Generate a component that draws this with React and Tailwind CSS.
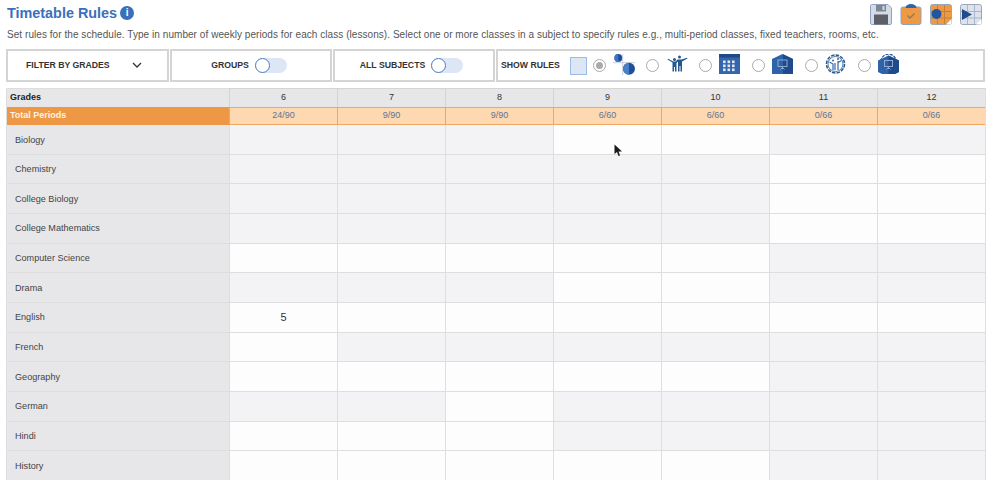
import React from 'react';

const grades = ['6', '7', '8', '9', '10', '11', '12'];
const totals = ['24/90', '9/90', '9/90', '6/60', '6/60', '0/66', '0/66'];

// open = grades the subject is taught in (white cells)
const subjects = [
  { name: 'Biology', open: [3, 4] },
  { name: 'Chemistry', open: [5, 6] },
  { name: 'College Biology', open: [5, 6] },
  { name: 'College Mathematics', open: [5, 6] },
  { name: 'Computer Science', open: [0, 1, 2, 3, 4] },
  { name: 'Drama', open: [3, 4] },
  { name: 'English', open: [0, 1, 2, 3, 4, 5, 6], values: { 0: '5' } },
  { name: 'French', open: [0] },
  { name: 'Geography', open: [0, 1, 2, 3, 4] },
  { name: 'German', open: [2] },
  { name: 'Hindi', open: [0, 1, 2] },
  { name: 'History', open: [0, 1, 2, 3, 4] },
];

const Toggle = () => (
  <span className="relative block w-[32px] h-[15px] rounded-full bg-[#dde6f5]">
    <span className="absolute left-0 top-0 w-[15px] h-[15px] rounded-full bg-white border-[1.500px] border-[#4a7cc4]"></span>
  </span>
);

const Radio = ({ checked }) => (
  <span className="flex items-center justify-center w-[13px] h-[13px] rounded-full bg-white border border-[#aaaaaa] shrink-0">
    {checked && <span className="w-[7px] h-[7px] rounded-full bg-[#aaaaaa]"></span>}
  </span>
);

const SplitIcon = () => (
  <svg width="22" height="21" viewBox="0 0 22 21" className="shrink-0">
    <path d="M9.700 0V21M0 8.700H22" stroke="#c5cfe0" strokeWidth="1" fill="none" />
    <circle cx="5.300" cy="3.900" r="3.900" fill="#1f4f97" />
    <path d="M5.300 0a3.900 3.900 0 0 0 0 7.800z" fill="#3f76c3" />
    <circle cx="16" cy="14.700" r="6" fill="#1f4f97" />
    <path d="M16 8.700a6 6 0 0 0 0 12z" fill="#4a80c8" />
  </svg>
);

const TeachersIcon = () => (
  <svg width="21" height="17" viewBox="0 0 21 17" className="shrink-0">
    <circle cx="7.500" cy="4.500" r="1.500" fill="#24578f" />
    <circle cx="12.500" cy="2" r="1.500" fill="#24578f" />
    <path d="M.5 4.500L5.500 7.500V16.500H7V12H8V16.500H9.500V8L11 6.500V16.500H12.500V11H13.500V16.500H15V6.500L20.500 3.500 20 2.800 14.500 4.500H10.500L8.500 6.500H6.300L1 3.800z" fill="#24578f" />
  </svg>
);

const CalendarIcon = () => (
  <svg width="21" height="20" viewBox="0 0 21 20" className="shrink-0">
    <rect width="21" height="20" fill="#3566ab" />
    <rect width="21" height="3.500" fill="#1f4a86" />
    {[6.500, 10.500, 14.500].map(y =>
      [4, 8.500, 13].map(x => <rect key={`${x}-${y}`} x={x} y={y} width="2.600" height="2.600" fill="#dfe8f5" />)
    )}
  </svg>
);

const RoomIcon = () => (
  <svg width="21" height="20" viewBox="0 0 21 20" className="shrink-0">
    <path d="M0 5L10.500 0 21 5V20H0z" fill="#2e62aa" />
    <path d="M11 .3L21 5V20H11z" fill="#1f4b8c" />
    <rect x="6" y="6" width="9" height="6.500" fill="none" stroke="#8fa9d0" strokeWidth="1" />
    <path d="M10.500 12.500V15M8.500 15.500L10.500 13.500 12.500 15.500" stroke="#8fa9d0" strokeWidth="1" fill="none" />
  </svg>
);

const GearOutlineIcon = () => (
  <svg width="21" height="20" viewBox="0 0 21 20" className="shrink-0">
    <circle cx="10.500" cy="10" r="9" fill="#ffffff" stroke="#24578f" strokeWidth="1.500" strokeDasharray="3.500 1.200" />
    <circle cx="10.500" cy="10" r="7.500" fill="none" stroke="#24578f" strokeWidth=".8" />
    <circle cx="8" cy="6.500" r="1" fill="#3566ab" />
    <circle cx="13" cy="5" r="1" fill="#3566ab" />
    <path d="M4.500 8L8 10V16M10 9V16M13 7V16M16.500 6.500L13 8.500" stroke="#3566ab" strokeWidth="1.200" fill="none" />
  </svg>
);

const GearRoomIcon = () => (
  <svg width="21" height="20" viewBox="0 0 21 20" className="shrink-0">
    <circle cx="10.500" cy="8" r="7.800" fill="#ffffff" stroke="#24578f" strokeWidth="1.300" strokeDasharray="3 1.200" />
    <path d="M0 6.500L10.500 1.500 21 6.500V18L17 20H4L0 18z" fill="#2e62aa" />
    <path d="M10.500 1.500L21 6.500V18L17 20H10.500z" fill="#1f4b8c" />
    <rect x="6.500" y="6.500" width="8" height="6" fill="none" stroke="#8fa9d0" strokeWidth="1" />
    <path d="M10.500 12.500V15M8.500 15.500L10.500 13.500 12.500 15.500" stroke="#8fa9d0" strokeWidth="1" fill="none" />
  </svg>
);

const SaveIcon = () => (
  <svg width="22" height="21" viewBox="0 0 22 21">
    <path d="M2.500 .5H18l3.500 3.500v15a1.500 1.500 0 0 1-1.500 1.500H2A1.500 1.500 0 0 1 .5 19V2A1.500 1.500 0 0 1 2.500 .5z" fill="#d5dbe6" stroke="#8ea3c4" />
    <rect x="6" y="1" width="10" height="6.500" fill="#7f8692" />
    <rect x="12.500" y="2" width="2" height="4" fill="#d5dbe6" />
    <rect x="4" y="10.500" width="14" height="10" fill="#5c5f66" />
  </svg>
);

const ClipboardIcon = () => (
  <svg width="22" height="21" viewBox="0 0 22 21">
    <rect x="1" y="3" width="20" height="17.500" rx="2" fill="#ee9a45" stroke="#8ea3c4" />
    <path d="M5.500 4a5.500 4 0 0 1 11 0z" fill="#2f63ad" />
    <path d="M7.500 11.500l2.500 2.500 4.500-4.500" stroke="#8a7a63" strokeWidth="1.300" fill="none" />
  </svg>
);

const GridDotIcon = () => (
  <svg width="22" height="21" viewBox="0 0 22 21">
    <rect x=".5" y=".5" width="21" height="20" rx="2" fill="#ee9a45" stroke="#9aa7bb" />
    <path d="M7.500 1V20M14.500 1V20M1 7.500H21M1 14H21" stroke="#c57f3c" strokeWidth="1" />
    <path d="M21.500 15v4a1.500 1.500 0 0 1-1.500 1.500h-4z" fill="#ffffff" />
    <circle cx="6.500" cy="10" r="5" fill="#1f55a3" />
  </svg>
);

const GridPlayIcon = () => (
  <svg width="22" height="21" viewBox="0 0 22 21">
    <rect x=".5" y=".5" width="21" height="20" rx="2" fill="#dde2ec" stroke="#9aa7bb" />
    <path d="M7.500 1V20M14.500 1V20M1 7.500H21M1 14H21" stroke="#a9b5c8" strokeWidth="1" />
    <path d="M21.500 15v4a1.500 1.500 0 0 1-1.500 1.500h-4z" fill="#ffffff" />
    <path d="M2 5L12 10.500 2 16z" fill="#1f4b8c" />
  </svg>
);

const App = () => {
  return (
    <div className="relative h-[480px] w-[1000px] overflow-hidden bg-white font-['Liberation_Sans',Arial,sans-serif] text-[#333333]">
      <div className="flex items-start justify-between pl-[7px] pr-[18px] h-[27px]">
        <div className="flex items-center gap-[3px] pt-[4px]">
          <h1 className="text-[14.400px] leading-[18px] font-bold text-[#3a70bb]">Timetable Rules</h1>
          <span className="flex items-center justify-center w-[14px] h-[14px] rounded-full bg-[#3a70bb] text-white text-[10px] leading-none font-bold">i</span>
        </div>
        <div className="flex items-center gap-[8px] pt-[4px]">
          <SaveIcon />
          <ClipboardIcon />
          <GridDotIcon />
          <GridPlayIcon />
        </div>
      </div>

      <p className="pl-[7px] h-[22px] text-[10px] leading-[16px] tracking-[0.055px] text-[#555555]">
        Set rules for the schedule. Type in number of weekly periods for each class (lessons). Select one or more classes in a subject to specify rules e.g., multi-period classes, fixed teachers, rooms, etc.
      </p>

      <div className="flex gap-[1px] ml-[6px] w-[979px] h-[33px] text-[8.700px] font-bold text-[#333333]">
        <div className="flex items-center w-[163px] border-2 border-[#d4d4d4] pl-[18px]">
          <span>FILTER BY GRADES</span>
          <svg width="10" height="6" viewBox="0 0 10 6" className="ml-[22px] mb-[1px]">
            <path d="M1 1l4 4 4-4" stroke="#333333" strokeWidth="1.300" fill="none" />
          </svg>
        </div>
        <div className="flex items-center justify-center gap-[6px] w-[162px] border-2 border-[#d4d4d4] pr-[4px]">
          <span>GROUPS</span>
          <Toggle />
        </div>
        <div className="flex items-center justify-center gap-[6px] w-[162px] border-2 border-[#d4d4d4] pr-[5px]">
          <span>ALL SUBJECTS</span>
          <Toggle />
        </div>
        <div className="flex items-center flex-1 border-2 border-[#d4d4d4] pl-[3px]">
          <span className="mr-[10px]">SHOW RULES</span>
          <span className="w-[17px] h-[18px] bg-[#dde6f5] border border-[#9dbbe6] mr-[6px] shrink-0"></span>
          <Radio checked />
          <span className="ml-[7px] mr-[11px] mb-[3px]"><SplitIcon /></span>
          <Radio />
          <span className="ml-[8px] mr-[11px] mb-[4px]"><TeachersIcon /></span>
          <Radio />
          <span className="ml-[7px] mr-[12px] mb-[3px]"><CalendarIcon /></span>
          <Radio />
          <span className="ml-[7px] mr-[12px] mb-[3px]"><RoomIcon /></span>
          <Radio />
          <span className="ml-[7px] mr-[12px] mb-[3px]"><GearOutlineIcon /></span>
          <Radio />
          <span className="ml-[7px] mb-[3px]"><GearRoomIcon /></span>
        </div>
      </div>

      <div className="grid grid-cols-[222px_repeat(7,108px)] ml-[6px] mt-[6px] w-[980px] border-x border-[#dedede] text-[9px]">
        <div className="flex items-center h-[19px] pl-[3px] bg-[#e7e7e9] border-t border-[#dddddd] font-bold text-[#222222]">Grades</div>
        {grades.map(grade => (
          <div key={grade} className="flex items-center justify-center h-[19px] bg-[#e7e7e9] border-t border-l border-[#d4d4d4] text-[#333333]">{grade}</div>
        ))}
        <div className="flex items-center h-[18px] pl-[3px] bg-[#ee9744] font-bold text-[#fdf3e6]">Total Periods</div>
        {totals.map((total, i) => (
          <div key={i} className="flex items-center justify-center h-[18px] bg-[#fdd8b0] border-l border-y border-[#f0a860] text-[#5f7597]">{total}</div>
        ))}
        {subjects.map(subject => (
          <React.Fragment key={subject.name}>
            <div className="flex items-center h-[29.670px] pl-[8px] pt-[2px] bg-[#e7e7e9] border-b border-[#dddddd] text-[9.100px] text-[#444444]">{subject.name}</div>
            {grades.map((grade, i) => (
              <div
                key={grade}
                className={`flex items-center justify-center h-[29.670px] border-l border-b border-[#dedede] text-[11px] text-[#333333] ${
                  subject.open.includes(i) ? 'bg-[#fefdfe]' : 'bg-[#f3f3f5]'
                }`}
              >
                {subject.values?.[i]}
              </div>
            ))}
          </React.Fragment>
        ))}
      </div>

      {/* mouse pointer caught in the screenshot */}
      <svg width="9" height="13" viewBox="0 0 9 13" className="absolute left-[614px] top-[144px]">
        <path d="M0.500 0.500V10L3 8l1.500 4 1.500-.6L4.600 7.600H8z" fill="#1a1a1a" />
      </svg>
    </div>
  );
};

export default App;
